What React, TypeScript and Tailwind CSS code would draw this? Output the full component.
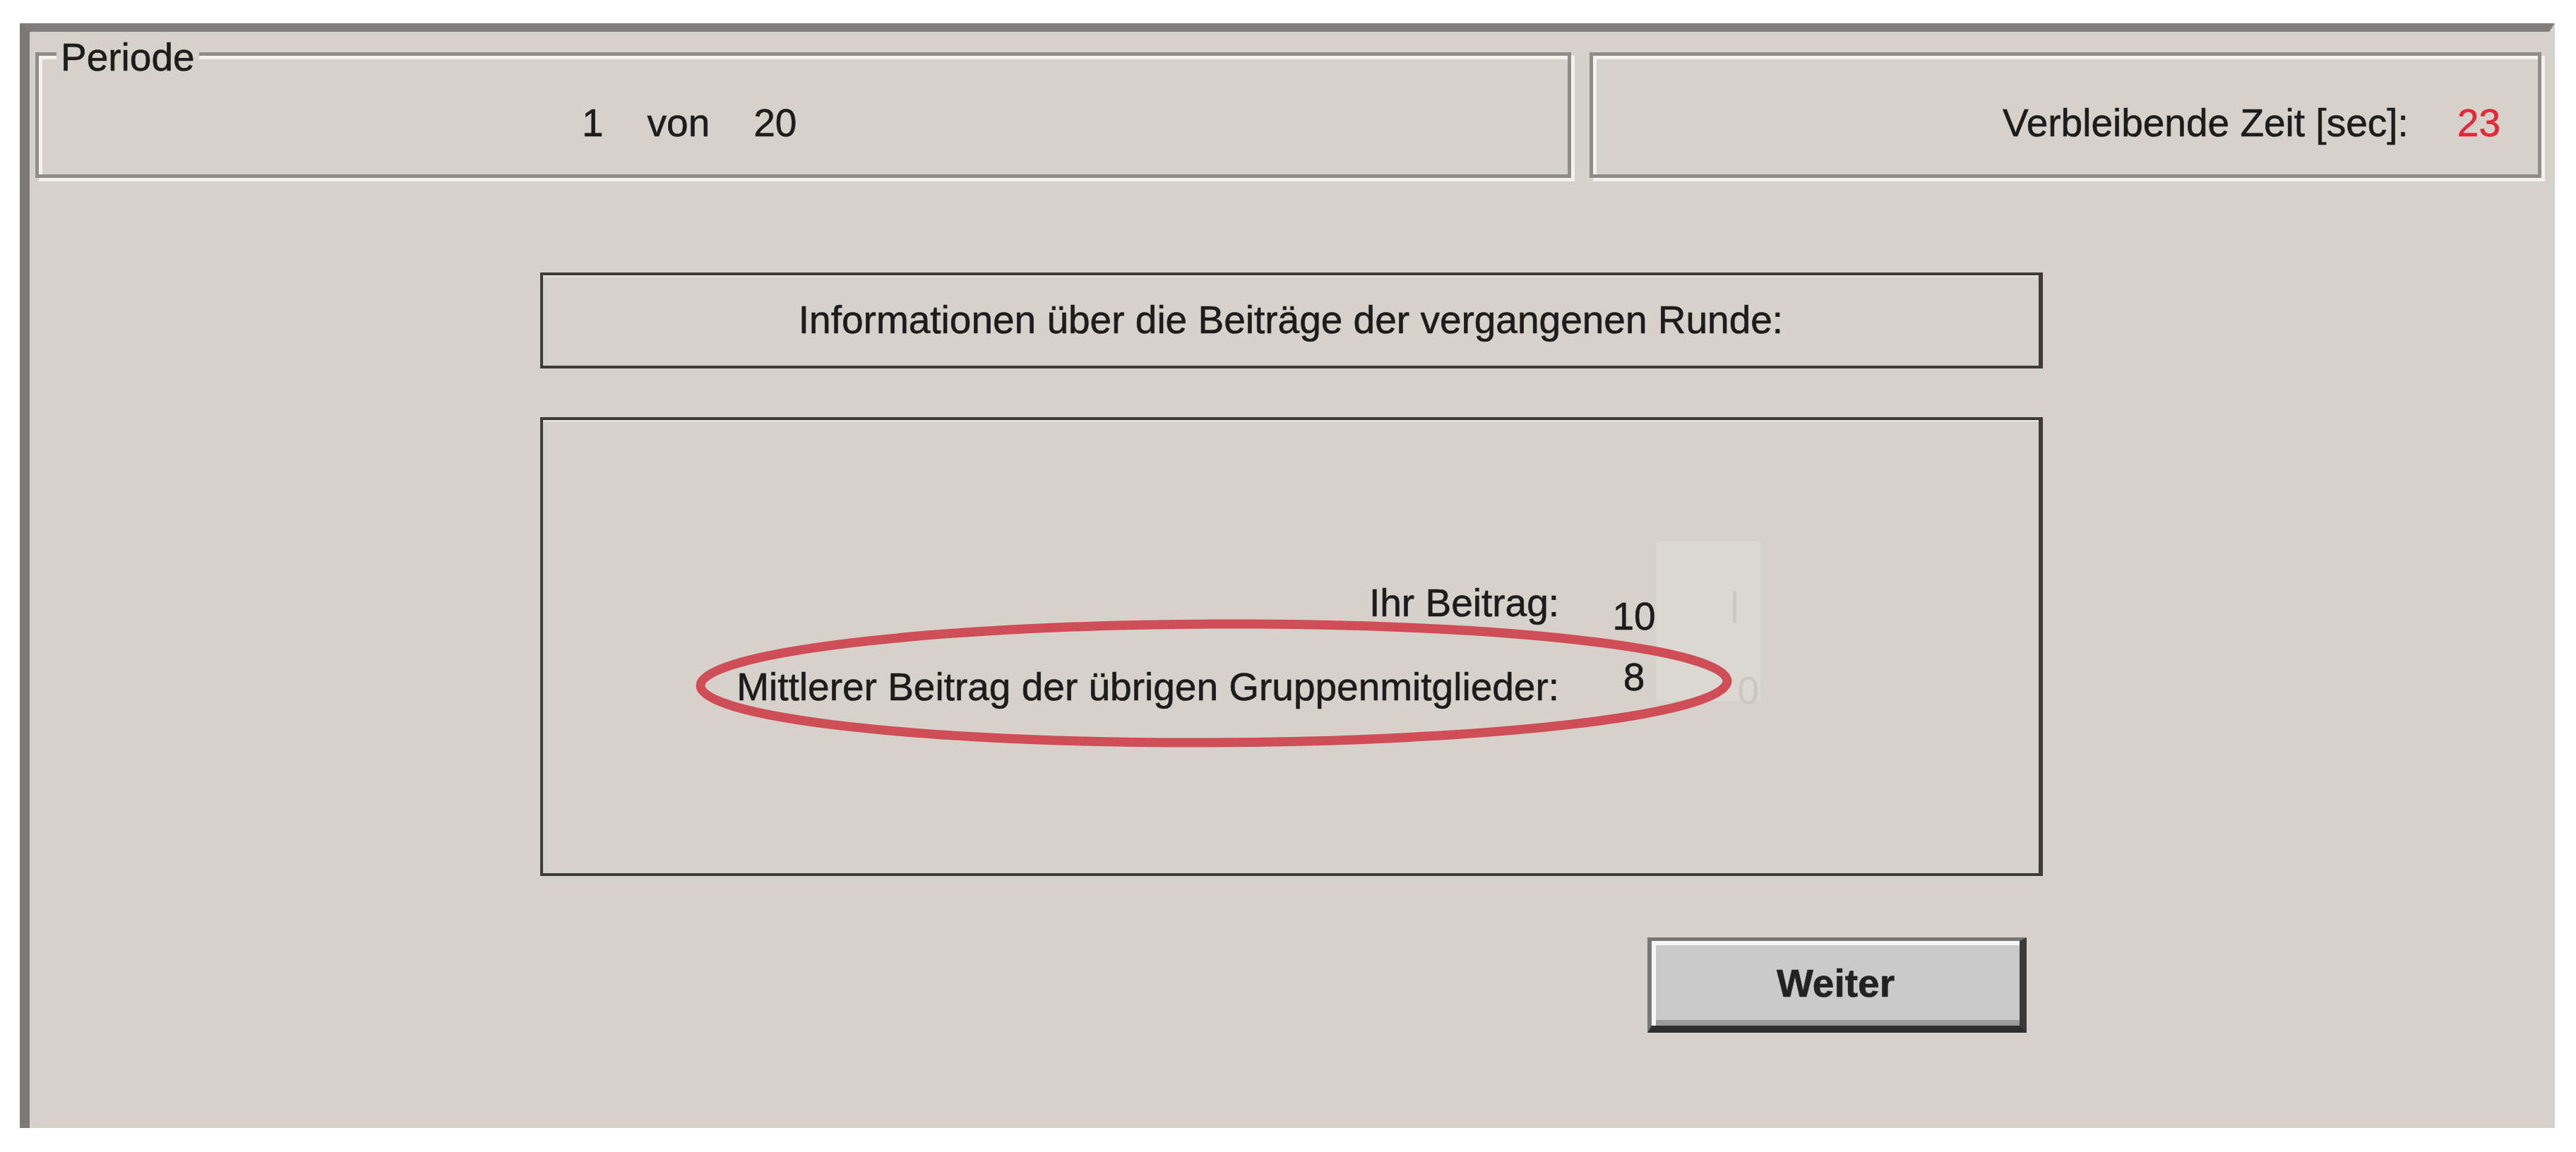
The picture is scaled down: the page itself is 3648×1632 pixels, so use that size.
const font = "font-['Liberation_Sans',Arial,sans-serif]";

const etched =
  "border-[5px] border-[#8f8d89] shadow-[inset_5px_5px_0_#f3f2ee,5px_5px_0_#f3f2ee]";

const App: React.FC = () => {
  return (
    <div className={`w-[3648px] h-[1632px] bg-white pt-[33px] pl-[28px] ${font}`}>
      <div className="w-[3590px] h-[1565px] bg-[#d6d2cb] border-t-[12px] border-l-[14px] border-t-[#7f7e7c] border-l-[#7a7976] border-r-[8px] border-r-[#d2d3c9] text-[55px] leading-[62px] text-[#1c1c1c] [-webkit-text-stroke:0.6px_#1c1c1c]">
        {/* top row */}
        <div className="flex gap-[26px] pl-[8px] pt-[29px]">
          <div className={`relative w-[2175px] h-[178px] ${etched}`}>
            <span className="absolute -top-[29px] left-[25px] bg-[#d6d2cb] px-[6px]">
              Periode
            </span>
            <div className="flex gap-[62px] pt-[64px] pl-[769px]">
              <span>1</span>
              <span>von</span>
              <span>20</span>
            </div>
          </div>
          <div className={`w-[1348px] h-[178px] ${etched}`}>
            <div className="flex justify-end gap-[69px] pt-[64px] pr-[53px]">
              <span>Verbleibende Zeit [sec]:</span>
              <span className="text-[#e4283a] [-webkit-text-stroke:0.6px_#e4283a]">23</span>
            </div>
          </div>
        </div>

        {/* info header */}
        <div className="ml-[723px] mt-[134px] w-[2128px] h-[136px] border-[4px] border-r-[6px] border-[#3d3b37] shadow-[inset_0_3px_0_#e2dfda] text-center pt-[32px]">
          Informationen über die Beiträge der vergangenen Runde:
        </div>

        {/* contributions */}
        <div className="relative ml-[723px] mt-[69px] w-[2128px] h-[650px] border-[4px] border-r-[6px] border-[#3d3b37] shadow-[inset_0_3px_0_#e2dfda]">
          <div className="flex pt-[172px]">
            <div className="w-[1439px] mt-[56px] flex flex-col gap-[57px] text-right">
              <span>Ihr Beitrag:</span>
              <span>Mittlerer Beitrag der übrigen Gruppenmitglieder:</span>
            </div>
            <div className="w-[64px] ml-[74px] mt-[75px] flex flex-col items-center gap-[24px]">
              <span>10</span>
              <span>8</span>
            </div>
            <div className="w-[147px] h-[226px] bg-[#dbd8d2] flex flex-col items-end pr-[2px] pt-[58px] gap-[60px] text-[#cbc7c0] [-webkit-text-stroke:0px]">
              <span className="pr-[28px] text-[50px]">|</span>
              <span>0</span>
            </div>
          </div>

          <svg
            className="absolute left-[213px] top-[280px]"
            width="1474"
            height="187"
            viewBox="0 0 1474 187"
          >
            <ellipse
              cx="737"
              cy="93"
              rx="727"
              ry="84"
              fill="none"
              stroke="#cf4d56"
              strokeWidth="13"
              transform="rotate(-0.25 737 93)"
            />
          </svg>
        </div>

        {/* button */}
        <div className="ml-[723px] mt-[87px] w-[2128px] flex justify-end pr-[23px]">
          <button className="w-[537px] h-[135px] bg-[#cacaca] border-t-[5px] border-l-[6px] border-r-[10px] border-b-[10px] border-t-[#777] border-l-[#777] border-r-[#3a3a3a] border-b-[#2e2e2e] shadow-[inset_6px_6px_0_#f6f6f6,inset_0_-8px_0_#9a9a9a] font-bold text-[#222] [-webkit-text-stroke:0.6px_#222]">
            Weiter
          </button>
        </div>
      </div>
    </div>
  );
};

export default App;
